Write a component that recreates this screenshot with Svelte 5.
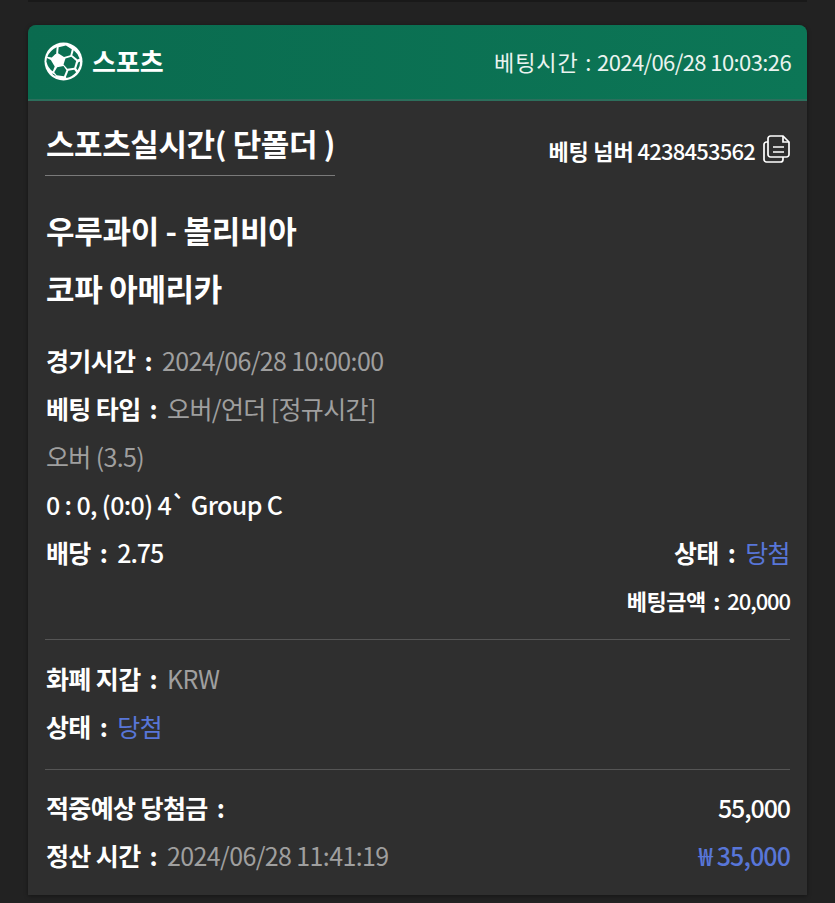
<script>
  let game = { home: "우루과이", away: "볼리비아", league: "코파 아메리카" };
</script>

<div class="page">
  <div class="prev"></div>
  <div class="card">
    <header class="head">
      <div class="sport">
        <svg class="ball" viewBox="0 0 40 40" aria-hidden="true">
          <circle cx="20" cy="20" r="19.500" fill="#fff" />
          <g fill="#0b6f52">
            <path d="M14.500 11.500L15 5.500l7.500-2 6 4-1.500 6-6.500 2z" />
            <path d="M22 17l6-2 5 4.500-2 7-7 1-4-4.500z" />
            <path d="M30.500 8.500q4 3 6 8.500l-2 1-5.500-4.500z" />
            <path d="M13 5.500l-.5 6L8 16l-4.500-1q2.500-6 9.500-9.500z" />
            <path d="M7 18.500l4 6.500-2 5q-5-3-6.500-10l.5-3.500z" />
            <path d="M13.500 26l6.500-1.500 3 4.500-2.500 6-7.500-1-2.500-3z" />
            <path d="M25 29.500l6-1 2 2.500q-4 4.500-10 6l-.5-1z" />
            <path d="M35 21l2-1q.2 5-2.500 9L33 27z" />
            <path d="M8 32l2.500 1 2 2.500q-2.500-.8-4.500-3.500z" />
          </g>
        </svg>
        <span class="sport-name">스포츠</span>
      </div>
      <span class="bet-time"><span class="lbl">베팅시간</span> <span class="time-colon">:</span> 2024/06/28 10:03:26</span>
    </header>

    <div class="body">
      <div class="title-row">
        <h2 class="title">스포츠실시간( 단폴더 )</h2>
        <div class="bet-no">
          <span><b>베팅 넘버</b> 4238453562</span>
          <svg class="copy" viewBox="0 0 27 29" fill="none" stroke="#fff" stroke-width="1.700" aria-hidden="true">
            <path d="M5 3.500A2.500 2.500 0 0 1 7.500 1H20l6 6v12.500a2.500 2.500 0 0 1-2.500 2.500h-16A2.500 2.500 0 0 1 5 19.500z" />
            <path d="M20 1v6h6" />
            <path d="M5 7H3.500A2.500 2.500 0 0 0 1 9.500v15A2.500 2.500 0 0 0 3.500 27h14a2.500 2.500 0 0 0 2.500-2.500V22" />
            <path d="M10 12h11M10 17h11" />
          </svg>
        </div>
      </div>

      <div class="game">
        <p>{game.home} - {game.away}</p>
        <p>{game.league}</p>
      </div>

      <div class="rows">
        <div class="row"><span><b>경기시간 <span class="colon">:</span></b> <i>2024/06/28 10:00:00</i></span></div>
        <div class="row"><span><b>베팅 타입 <span class="colon">:</span></b> <i>오버/언더 [정규시간]</i></span></div>
        <div class="row"><i>오버 (3.5)</i></div>
        <div class="row"><strong>0 : 0, (0:0) 4` Group C</strong></div>
        <div class="row split">
          <span><b>배당 <span class="colon">:</span></b> <strong class="num">2.75</strong></span>
          <span><b>상태 <span class="colon">:</span></b> <em>당첨</em></span>
        </div>
        <div class="row end small"><span><b>베팅금액 <span class="colon">:</span></b> <strong class="num">20,000</strong></span></div>
      </div>

      <div class="rows section">
        <div class="row"><span><b>화폐 지갑 <span class="colon">:</span></b> <i>KRW</i></span></div>
        <div class="row"><span><b>상태 <span class="colon">:</span></b> <em>당첨</em></span></div>
      </div>

      <div class="rows section last">
        <div class="row split">
          <b>적중예상 당첨금 <span class="colon">:</span></b>
          <strong class="num">55,000</strong>
        </div>
        <div class="row split">
          <span><b>정산 시간 <span class="colon">:</span></b> <i>2024/06/28 11:41:19</i></span>
          <em class="paid">₩ 35,000</em>
        </div>
      </div>
    </div>
  </div>
</div>

<style>
  :global(body) {
    background: #222;
  }
  .page {
    height: 903px;
    box-sizing: border-box;
    overflow: hidden;
    font-family: "Noto Sans CJK KR", "Noto Sans", sans-serif;
    color: #fff;
  }
  .prev {
    height: 2px;
    margin: 0 28px 23px;
    background: #191919;
  }
  .card {
    margin: 0 28px;
    background: #2f2f2f;
    border-radius: 8px 8px 0 0;
    height: 870px;
    box-shadow: 0 1px 4px rgba(0, 0, 0, 0.4);
  }
  .head {
    height: 76px;
    box-sizing: border-box;
    padding: 0 16px 2px;
    background: linear-gradient(90deg, #0a6b4f, #0c7656);
    border-bottom: 2px solid #2c6f5c;
    border-radius: 8px 8px 0 0;
    display: flex;
    align-items: center;
    justify-content: space-between;
  }
  .sport {
    display: flex;
    align-items: center;
    gap: 9px;
  }
  .ball {
    width: 39px;
    height: 39px;
  }
  .sport-name {
    font-size: 26px;
    font-weight: 700;
    line-height: 30px;
    margin-top: -1px;
  }
  .bet-time {
    font-size: 22px;
    letter-spacing: -0.6px;
    color: #eaf3ef;
  }
  .lbl {
    letter-spacing: 1px;
  }
  .time-colon {
    margin: 0 2px;
  }
  .colon {
    margin: 0 5px 0 4px;
    font-weight: 700;
  }
  .body {
    padding: 0 17px;
  }
  .title-row {
    display: flex;
    justify-content: space-between;
    align-items: center;
    padding-top: 22px;
  }
  .title {
    margin: 0;
    font-size: 31px;
    font-weight: 700;
    line-height: 40px;
    padding: 0 0 12px 1px;
    border-bottom: 1px solid #7a7a7a;
    letter-spacing: -0.4px;
  }
  .bet-no {
    display: flex;
    align-items: center;
    gap: 8px;
    font-size: 22px;
    font-weight: 500;
    letter-spacing: -0.8px;
  }
  .bet-no b {
    font-weight: 700;
    letter-spacing: -0.2px;
  }
  .copy {
    width: 27px;
    height: 29px;
  }
  .game {
    padding: 25px 1px 19px;
    font-size: 31px;
    font-weight: 700;
    letter-spacing: -0.3px;
  }
  .game p {
    margin: 0;
    line-height: 58px;
  }
  .rows {
    padding: 0 0 0 1px;
    font-size: 25px;
  }
  .row {
    height: 48px;
    display: flex;
    align-items: center;
    letter-spacing: -0.63px;
  }
  .row b {
    font-weight: 700;
  }
  .row strong {
    font-weight: 500;
  }
  .row .num {
    letter-spacing: -1.1px;
  }
  .row i {
    font-style: normal;
    color: #9f9f9f;
  }
  .row em {
    font-style: normal;
    color: #5876d8;
  }
  .split {
    justify-content: space-between;
  }
  .end {
    justify-content: flex-end;
  }
  .small {
    font-size: 22px;
    letter-spacing: -0.5px;
  }
  .small .colon {
    margin: 0 3px;
  }
  .section {
    margin: 15px 0 0;
    padding: 14px 0 19px 1px;
    border-top: 1px solid #555;
  }
  .section.last {
    margin-top: 0;
    padding: 13px 0 0 1px;
  }
  .row .paid {
    font-weight: 500;
    letter-spacing: -0.9px;
  }
</style>
